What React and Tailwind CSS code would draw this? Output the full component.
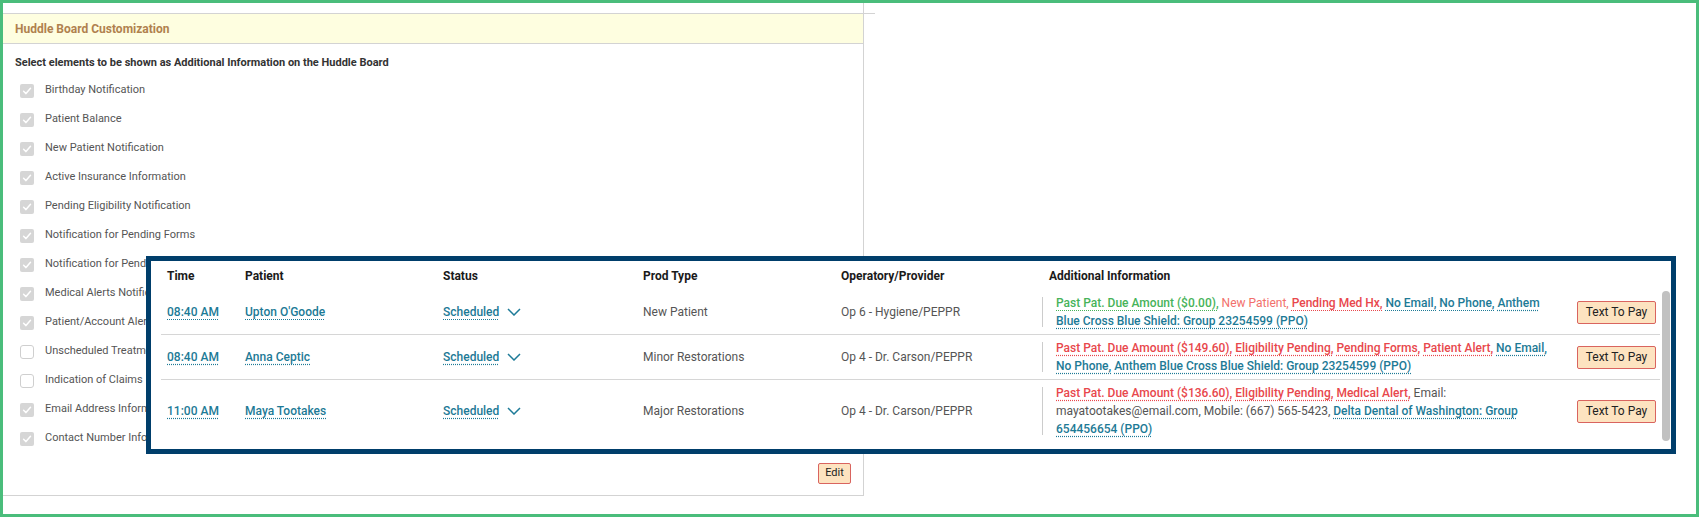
import React from "react";

const items = [
  ["Birthday Notification", true],
  ["Patient Balance", true],
  ["New Patient Notification", true],
  ["Active Insurance Information", true],
  ["Pending Eligibility Notification", true],
  ["Notification for Pending Forms", true],
  ["Notification for Pending Medical History", true],
  ["Medical Alerts Notification", true],
  ["Patient/Account Alerts", true],
  ["Unscheduled Treatment", false],
  ["Indication of Claims", false],
  ["Email Address Information", true],
  ["Contact Number Information", true],
];

function Check({ checked }) {
  if (checked) {
    return (
      <span className="flex h-[14px] w-[14px] shrink-0 items-center justify-center rounded-[2px] bg-[#d6d6d6]">
        <svg width="10" height="10" viewBox="0 0 10 10">
          <path d="M1.6 5.3 L4 7.6 L8.5 2.3" fill="none" stroke="#ffffff" strokeWidth="1.5" strokeLinecap="round" strokeLinejoin="round" />
        </svg>
      </span>
    );
  }
  return <span className="h-[14px] w-[14px] shrink-0 rounded-[3px] border border-[#cfcfcf] bg-white" />;
}

function Chevron() {
  return (
    <svg width="14" height="8" viewBox="0 0 14 8" className="ml-[8px]">
      <path d="M1 1 L7 7 L13 1" fill="none" stroke="#1e7b98" strokeWidth="1.5" />
    </svg>
  );
}

const T = ({ children }) => (
  <span className="font-medium text-[#1d7a96] underline decoration-dotted underline-offset-[3px]">{children}</span>
);
const R = ({ children }) => (
  <span className="font-medium text-[#e8474c] underline decoration-dotted underline-offset-[3px]">{children}</span>
);
const G = ({ children }) => (
  <span className="font-medium text-[#47b35a] underline decoration-dotted underline-offset-[3px]">{children}</span>
);
const L = ({ children }) => <span className="text-[#f2706c]">{children}</span>;
const Gr = ({ children }) => <span className="text-[#555555]">{children}</span>;

const rows = [
  {
    time: "08:40 AM",
    patient: "Upton O'Goode",
    prod: "New Patient",
    op: "Op 6 - Hygiene/PEPPR",
    info: (
      <>
        <G>Past Pat. Due Amount ($0.00),</G> <L>New Patient,</L> <R>Pending Med Hx,</R> <T>No Email,</T>{" "}
        <T>No Phone,</T> <T>Anthem</T>
        <br />
        <T>Blue Cross Blue Shield: Group 23254599 (PPO)</T>
      </>
    ),
  },
  {
    time: "08:40 AM",
    patient: "Anna Ceptic",
    prod: "Minor Restorations",
    op: "Op 4 - Dr. Carson/PEPPR",
    info: (
      <>
        <R>Past Pat. Due Amount ($149.60),</R> <R>Eligibility Pending,</R> <R>Pending Forms,</R>{" "}
        <R>Patient Alert,</R> <T>No Email,</T>
        <br />
        <T>No Phone,</T> <T>Anthem Blue Cross Blue Shield: Group 23254599 (PPO)</T>
      </>
    ),
  },
  {
    time: "11:00 AM",
    patient: "Maya Tootakes",
    prod: "Major Restorations",
    op: "Op 4 - Dr. Carson/PEPPR",
    info: (
      <>
        <R>Past Pat. Due Amount ($136.60),</R> <R>Eligibility Pending,</R> <R>Medical Alert,</R>{" "}
        <Gr>Email:</Gr>
        <br />
        <Gr>mayatootakes@email.com, Mobile: (667) 565-5423,</Gr> <T>Delta Dental of Washington: Group</T>
        <br />
        <T>654456654 (PPO)</T>
      </>
    ),
  },
];

export default function App() {
  return (
    <div className="relative h-[517px] w-[1699px] overflow-hidden border-[3px] border-[#4abd7b] bg-white font-[Roboto,sans-serif]">
      {/* Settings panel */}
      <div className="relative h-[493px] w-[861px] border-r border-b border-[#d3d3d3]">
        <div className="h-[10px]" />
        <div className="h-px w-[872px] bg-[#d3d3d3]" />
        <div className="flex h-[30px] items-center border-b border-[#d3d3d3] bg-[#fefee0] pl-[12px] text-[12px] font-bold text-[#b0814e]">
          Huddle Board Customization
        </div>
        <div className="pl-[12px] pt-[11px] text-[11px] font-bold leading-[16px] text-[#333333]">
          Select elements to be shown as Additional Information on the Huddle Board
        </div>
        <div className="mt-[5px] flex flex-col">
          {items.map(([label, checked]) => (
            <div key={label} className="flex h-[29px] items-center pl-[17px]">
              <Check checked={checked} />
              <span className="ml-[11px] text-[11px] text-[#555555]">{label}</span>
            </div>
          ))}
        </div>
        <div className="mt-[10px] flex justify-end pr-[12px]">
          <button className="flex h-[21px] w-[33px] items-center justify-center rounded-[2px] border border-[#d9645f] bg-[#fde3c0] text-[11px] text-[#222222]">
            Edit
          </button>
        </div>
      </div>

      {/* Huddle board table overlay */}
      <div className="absolute left-[143px] top-[253px] h-[198px] w-[1530px] border-[5px] border-[#003e6b] bg-white">
        <div className="flex h-full">
          <div className="ml-[10px] w-[1499px] text-[12px]">
            <div className="flex h-[29px] items-center font-bold text-[#1a1a1a]">
              <div className="w-[78px] pl-[6px]">Time</div>
              <div className="w-[198px] pl-[6px]">Patient</div>
              <div className="w-[200px] pl-[6px]">Status</div>
              <div className="w-[198px] pl-[6px]">Prod Type</div>
              <div className="w-[207px] pl-[6px]">Operatory/Provider</div>
              <div className="w-[523px] pl-[7px]">Additional Information</div>
              <div className="flex-1" />
            </div>
            {rows.map((r, i) => (
              <div
                key={i}
                className={`flex items-center py-[4px] ${i < rows.length - 1 ? "border-b border-[#d6d6d6]" : ""}`}
              >
                <div className="w-[78px] pl-[6px]">
                  <span className="font-medium text-[#1d7a96] underline decoration-dotted underline-offset-[3px]">{r.time}</span>
                </div>
                <div className="w-[198px] pl-[6px]">
                  <span className="font-medium text-[#1d7a96] underline decoration-dotted underline-offset-[3px]">{r.patient}</span>
                </div>
                <div className="flex w-[200px] items-center pl-[6px]">
                  <span className="font-medium text-[#1d7a96] underline decoration-dotted underline-offset-[3px]">Scheduled</span>
                  <Chevron />
                </div>
                <div className="w-[198px] pl-[6px] text-[#555555]">{r.prod}</div>
                <div className="w-[207px] pl-[6px] text-[#555555]">{r.op}</div>
                <div className="flex w-[523px] items-stretch">
                  <div className="my-[3px] w-px bg-[#cccccc]" />
                  <div className="whitespace-nowrap pl-[13px] leading-[18px] text-[#555555]">{r.info}</div>
                </div>
                <div className="flex flex-1 justify-end pr-[4px]">
                  <button className="flex h-[23px] w-[79px] items-center justify-center rounded-[2px] border border-[#d9645f] bg-[#fde3c0] text-[12px] text-[#222222]">
                    Text To Pay
                  </button>
                </div>
              </div>
            ))}
          </div>
          <div className="w-[11px] pl-[2px]">
            <div className="mt-[30px] h-[150px] w-[8px] rounded-[4px] bg-[#c1c1c1]" />
          </div>
        </div>
      </div>
    </div>
  );
}
